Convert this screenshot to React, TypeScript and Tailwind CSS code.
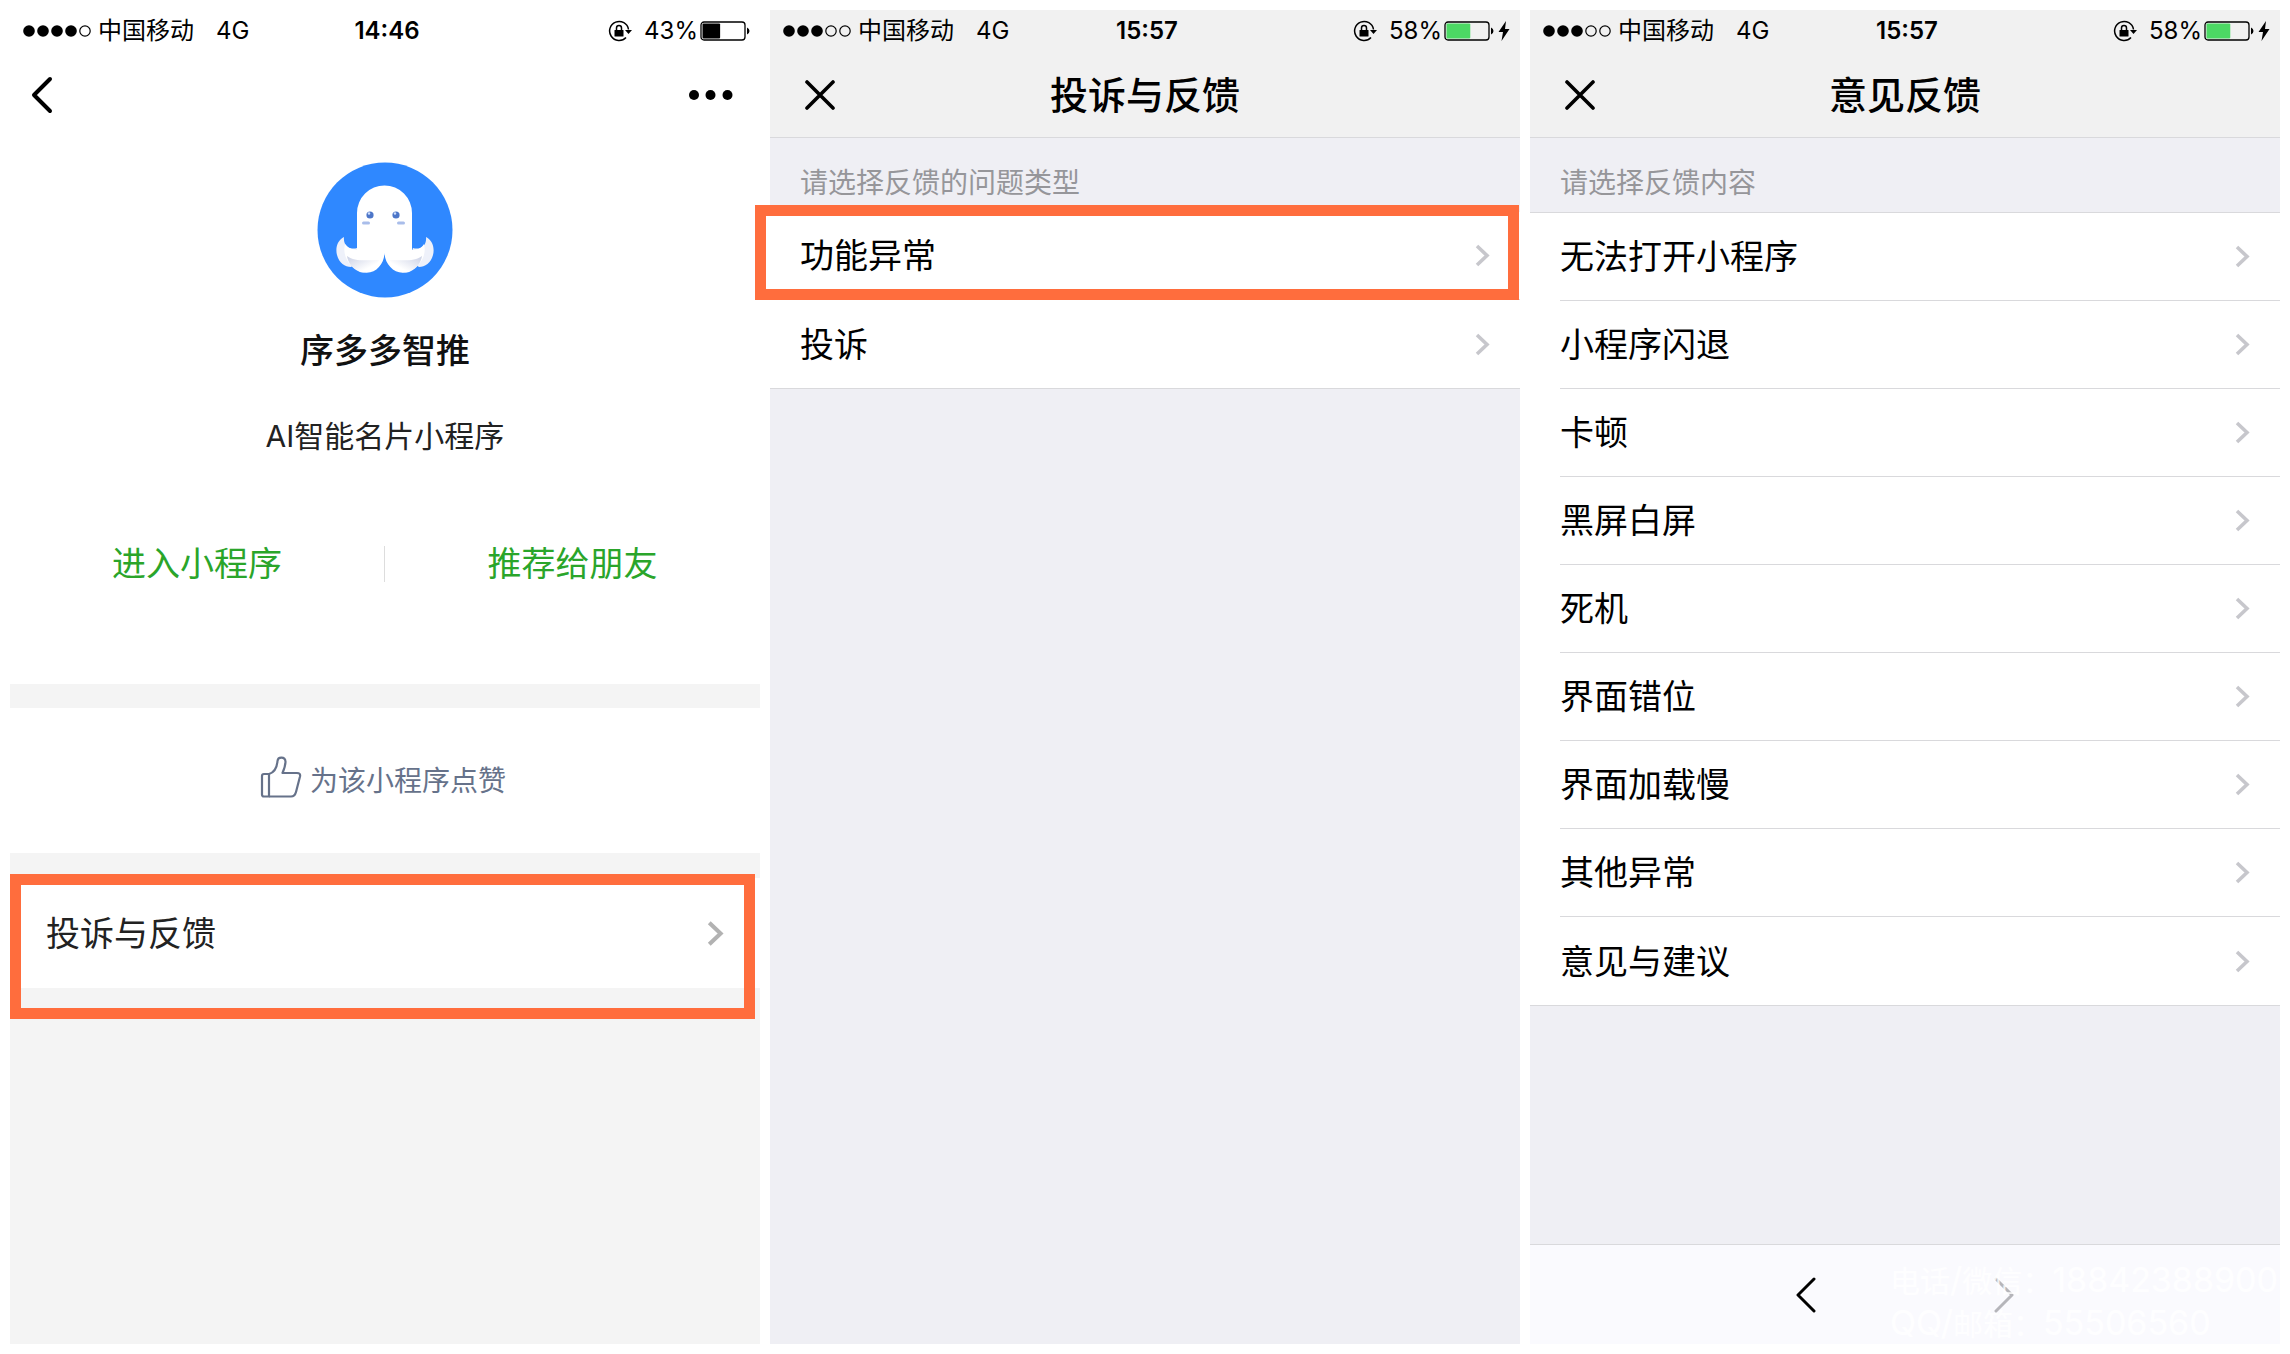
import React from "react";

const font = "font-['Inter','Noto_Sans_CJK_SC',sans-serif]";

function Chevron({ className }: { className?: string }) {
  return (
    <svg viewBox="0 0 15 23" width="15" height="23" fill="none" stroke="currentColor" strokeWidth="3.6" className={className} aria-hidden="true">
      <path d="M2 2 L12 11.500 L2 21" />
    </svg>
  );
}

function StatusBar({ filled, time, percent, charging }: { filled: number; time: string; percent: number; charging?: boolean }) {
  return (
    <div className="grid h-[42px] grid-cols-3 items-center pl-1 text-2xl text-black">
      <div className="flex items-center gap-1.5 whitespace-nowrap pl-2">
        <svg viewBox="0 0 70 14" width="70" height="14" aria-hidden="true">
          {[0, 1, 2, 3, 4].map((i) => (
            <circle key={i} cx={7 + i * 14} cy="7" r={i < filled ? 5.8 : 5.2} fill={i < filled ? "#000" : "none"} stroke="#000" strokeWidth={i < filled ? 0 : 1.2} />
          ))}
        </svg>
        <span>中国移动</span>
        <span className="ml-4">4G</span>
      </div>
      <div className="text-center font-semibold">{time}</div>
      <div className="flex items-center justify-end pr-2.5">
        <svg viewBox="0 0 24 24" width="24" height="24" fill="none" stroke="#000" strokeWidth="1.5" className="mr-3" aria-hidden="true">
          <path d="M18 18.500 A9.500 9.500 0 1 1 20.500 10.500" />
          <path d="M17 11 H24 L20.500 15 Z" fill="#000" stroke="none" />
          <rect x="6.500" y="11" width="9" height="6.500" rx="0.500" fill="#000" stroke="none" />
          <path d="M8.500 11.500 V9 a2.500 2.500 0 0 1 5 0 V11.500" />
        </svg>
        <span className="mr-0.5">{percent}%</span>
        <svg viewBox="0 0 50 20" width="50" height="20" aria-hidden="true">
          <rect x="1" y="1" width="44" height="18" rx="3" fill="none" stroke="#000" strokeWidth="1.3" />
          <rect x="2.500" y="2.500" width={(41 * percent) / 100} height="15" rx="1" fill={charging ? "#4cd964" : "#000"} />
          <path d="M47 6.500 Q49.500 7.500 49.500 10 T47 13.500 Z" fill="#000" />
        </svg>
        {charging && (
          <svg viewBox="0 0 12 20" width="12" height="20" className="ml-1" aria-hidden="true">
            <path d="M8 0 L0.500 11 H5 L3.500 20 L11.500 8 H7 Z" fill="#000" />
          </svg>
        )}
      </div>
    </div>
  );
}

function SheetHeader({ title }: { title: string }) {
  return (
    <header className="border-b border-[#d9d9dc] bg-[#f1f1f1]">
      <StatusBar filled={3} time="15:57" percent={58} charging />
      <div className="grid h-[85px] grid-cols-[80px_1fr_80px] items-center">
        <button type="button" aria-label="关闭" className="flex h-full items-center pl-[35px]">
          <svg viewBox="0 0 30 30" width="30" height="30" fill="none" stroke="#000" strokeWidth="3.6" strokeLinecap="round" aria-hidden="true">
            <path d="M2 2 L28 28 M28 2 L2 28" />
          </svg>
        </button>
        <h1 className="text-center text-[38px] font-medium leading-none text-black">{title}</h1>
      </div>
    </header>
  );
}

function Row({ label, last }: { label: string; last?: boolean }) {
  return (
    <li className="pl-[30px]">
      <button
        type="button"
        className={`flex h-[88px] w-full items-center justify-between pr-[30px] text-left text-[34px] text-black ${last ? "" : "border-b border-[#d9d9dc]"}`}
      >
        {label}
        <Chevron className="text-[#c7c7cc]" />
      </button>
    </li>
  );
}

function ProfilePanel() {
  return (
    <section className="flex flex-col bg-[#f4f4f4]">
      <div className="bg-white">
        <StatusBar filled={4} time="14:46" percent={43} />
        <div className="flex h-[86px] items-center justify-between pl-5 pr-[26px]">
          <button type="button" aria-label="返回">
            <svg viewBox="0 0 24 38" width="24" height="38" fill="none" stroke="#000" strokeWidth="4" strokeLinecap="round" strokeLinejoin="round" aria-hidden="true">
              <path d="M20 3 L4 19 L20 35" />
            </svg>
          </button>
          <button type="button" aria-label="更多">
            <svg viewBox="0 0 46 12" width="46" height="12" aria-hidden="true">
              <circle cx="6" cy="6" r="5" />
              <circle cx="22.500" cy="6" r="5" />
              <circle cx="39.500" cy="6" r="5" />
            </svg>
          </button>
        </div>
        <div className="flex flex-col items-center pt-6">
          <svg viewBox="0 0 136 136" width="136" height="136" aria-hidden="true">
            <defs>
              <linearGradient id="arm" x1="0" y1="0" x2="1" y2="1">
                <stop offset="0" stopColor="#c9cfe4" />
                <stop offset="0.7" stopColor="#ffffff" />
              </linearGradient>
              <linearGradient id="arm2" x1="1" y1="0" x2="0" y2="1">
                <stop offset="0" stopColor="#c9cfe4" />
                <stop offset="0.7" stopColor="#ffffff" />
              </linearGradient>
            </defs>
            <circle cx="68" cy="68" r="67.500" fill="#2f88ff" />
            <path d="M27 75 C21 78 18 85 20 93 C22 101 28 105 34 105 L44 98 L40 86 C33 88 26 84 27 75 Z" fill="#eef1fa" />
            <path d="M109 75 C115 78 118 85 116 93 C114 101 108 105 102 105 L92 98 L96 86 C103 88 110 84 109 75 Z" fill="#eef1fa" />
            <path d="M40 88 V51 A27.500 27.500 0 0 1 95 51 V88 C103 88 106 84 107 82 C110 94 103 104 93 109 C80 115 68 104 67.500 91 C67 104 56 115 42 109 C32 104 25 94 28 82 C31 86 34 87 40 88 Z" fill="#fff" />
            <path d="M30 94 C38 100 50 98 62 98 C58 109 48 113 41 109 C36 107 31 101 30 94 Z" fill="url(#arm)" />
            <path d="M105 94 C97 100 85 98 73 98 C77 109 87 113 94 109 C99 107 104 101 105 94 Z" fill="url(#arm2)" />
            <circle cx="53" cy="53" r="3.600" fill="#4d76c8" />
            <circle cx="79" cy="53" r="3.600" fill="#4d76c8" />
            <circle cx="52" cy="51.500" r="1.200" fill="#cfe0ff" />
            <circle cx="78" cy="51.500" r="1.200" fill="#cfe0ff" />
            <rect x="45" y="59.500" width="8" height="3" rx="1.500" fill="#a9bdea" />
            <rect x="80" y="59.500" width="8" height="3" rx="1.500" fill="#a9bdea" />
          </svg>
          <h1 className="mt-7 text-[34px] font-medium leading-[50px] text-[#111]">序多多智推</h1>
          <p className="mt-9 text-[30px] leading-[48px] text-[#222]">AI智能名片小程序</p>
        </div>
        <div className="mt-[86px] grid grid-cols-2 divide-x divide-[#dddddd] pb-[102px]">
          <button type="button" className="h-9 text-[34px] leading-9 text-[#2aa52a]">进入小程序</button>
          <button type="button" className="h-9 text-[34px] leading-9 text-[#2aa52a]">推荐给朋友</button>
        </div>
      </div>
      <button type="button" className="mt-6 flex h-[145px] items-center justify-center gap-2 bg-white pr-1 text-[28px] text-[#66728a]">
        <svg viewBox="-1 -1 42 42" width="42" height="42" fill="none" stroke="currentColor" strokeWidth="2.2" strokeLinejoin="round" className="mb-2" aria-hidden="true">
          <path d="M8 17 H3 Q1 17 1 19 V37.500 Q1 39.500 3 39.500 H8 Z" />
          <path d="M8 17 C13 15.500 16 10 16.500 4 C17 -0.500 24 -0.500 24.500 4.500 C24.500 9 23 12.500 21.500 16 H36 Q39.800 16 39 19.500 L35 35 Q33.800 39.500 30 39.500 H8" />
        </svg>
        为该小程序点赞
      </button>
      <div className="relative mt-[25px]">
        <button type="button" className="flex h-[110px] w-full items-center justify-between bg-white px-9 text-left text-[34px] text-[#222]">
          投诉与反馈
          <Chevron className="h-[27px] w-[17px] text-[#b2b2b2]" />
        </button>
        <div className="pointer-events-none absolute -bottom-[31px] -top-1 left-0 right-[5px] border-[11px] border-[#ff6d3d]" />
      </div>
    </section>
  );
}

function TypePanel() {
  return (
    <section className="flex flex-col bg-[#efeff4]">
      <SheetHeader title="投诉与反馈" />
      <p className="h-[74px] pl-[30px] pt-[25px] text-[28px] leading-10 text-[#96969a]">请选择反馈的问题类型</p>
      <div className="relative border-b border-[#d9d9dc]">
        <ul className="bg-white">
          <Row label="功能异常" />
          <Row label="投诉" last />
        </ul>
        <div className="pointer-events-none absolute -left-[15px] -top-[7px] right-px h-[95px] border-[11px] border-[#ff6d3d]" />
      </div>
    </section>
  );
}

const issues = ["无法打开小程序", "小程序闪退", "卡顿", "黑屏白屏", "死机", "界面错位", "界面加载慢", "其他异常", "意见与建议"];

function ContentPanel() {
  return (
    <section className="flex flex-col bg-[#efeff4]">
      <SheetHeader title="意见反馈" />
      <p className="h-[75px] border-b border-[#d9d9dc] pl-[30px] pt-[25px] text-[28px] leading-10 text-[#96969a]">请选择反馈内容</p>
      <ul className="border-b border-[#d9d9dc] bg-white">
        {issues.map((label, i) => (
          <Row key={label} label={label} last={i === issues.length - 1} />
        ))}
      </ul>
      <footer className="relative mt-auto flex h-[100px] items-center justify-center gap-[174px] border-t border-[#d9d9dc] bg-[#fafafe]">
        <button type="button" aria-label="后退">
          <svg viewBox="0 0 24 36" width="24" height="36" fill="none" stroke="#000" strokeWidth="3" strokeLinecap="round" strokeLinejoin="round" aria-hidden="true">
            <path d="M20 2 L4 18 L20 34" />
          </svg>
        </button>
        <button type="button" aria-label="前进">
          <svg viewBox="0 0 24 36" width="24" height="36" fill="none" stroke="#b5b5ba" strokeWidth="3" strokeLinecap="round" strokeLinejoin="round" aria-hidden="true">
            <path d="M4 2 L20 18 L4 34" />
          </svg>
        </button>
        <div className="pointer-events-none absolute left-[360px] top-3.5 whitespace-nowrap text-[34px] leading-[42px] text-white/80">
          <p>
            <span className="text-[30px]">电话</span>/<span className="text-[30px]">微信：</span>18842388900
          </p>
          <p>
            QQ/<span className="text-[30px]">邮箱：</span>55506560
          </p>
        </div>
      </footer>
    </section>
  );
}

export default function App() {
  return (
    <main className={`grid min-h-screen grid-cols-3 gap-2.5 bg-white p-2.5 ${font}`}>
      <ProfilePanel />
      <TypePanel />
      <ContentPanel />
    </main>
  );
}
